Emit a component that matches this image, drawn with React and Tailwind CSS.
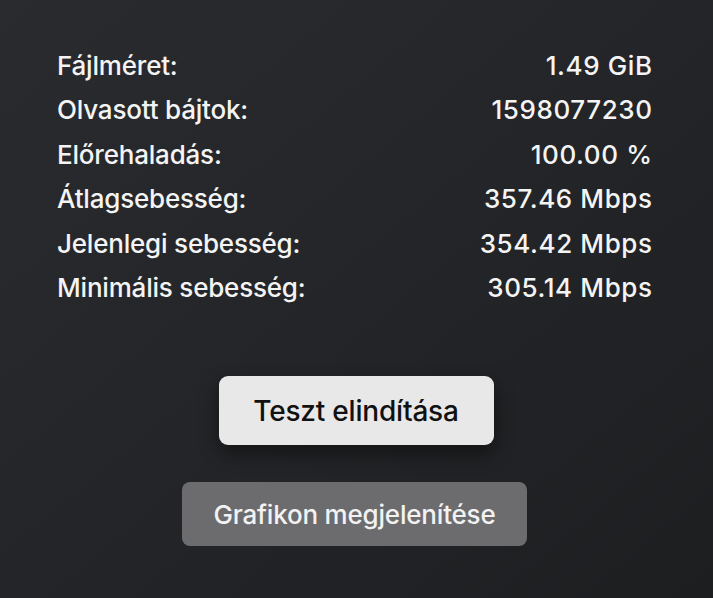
const stats = [
  ['Fájlméret:', '1.49 GiB'],
  ['Olvasott bájtok:', '1598077230'],
  ['Előrehaladás:', '100.00 %'],
  ['Átlagsebesség:', '357.46 Mbps'],
  ['Jelenlegi sebesség:', '354.42 Mbps'],
  ['Minimális sebesség:', '305.14 Mbps'],
];

export default function App() {
  return (
    <div
      className="w-[713px] h-[598px] overflow-hidden bg-gradient-to-br from-[#2a2b2e] via-[#242528] to-[#1d1e20] text-white flex flex-col"
      style={{ fontFamily: 'Inter, "Noto Sans", sans-serif' }}
    >
      <div className="pt-[43px] pl-[57px] pr-[61px]">
        {stats.map(([label, value]) => (
          <div key={label} className="h-[44.5px] flex items-center justify-between text-[26px] font-medium tracking-[-0.2px] text-[#f4f4f4]">
            <span>{label}</span>
            <span className="tracking-[0.6px] -mr-[0.6px]">{value}</span>
          </div>
        ))}
      </div>

      <div className="flex flex-col items-center mt-[66px] pr-[1px]">
        <button className="w-[275px] h-[69px] rounded-[9px] bg-[#e8e8e8] text-[#111] text-[28px] font-medium tracking-[-0.2px] shadow-[0_8px_20px_rgba(0,0,0,0.45)]">
          Teszt elindítása
        </button>
        <button className="mt-[37px] -ml-[3px] w-[345px] h-[64px] rounded-[8px] bg-[#6c6c6e] text-[#f2f2f2] text-[26px] font-medium tracking-[-0.2px]">
          Grafikon megjelenítése
        </button>
      </div>
    </div>
  );
}
